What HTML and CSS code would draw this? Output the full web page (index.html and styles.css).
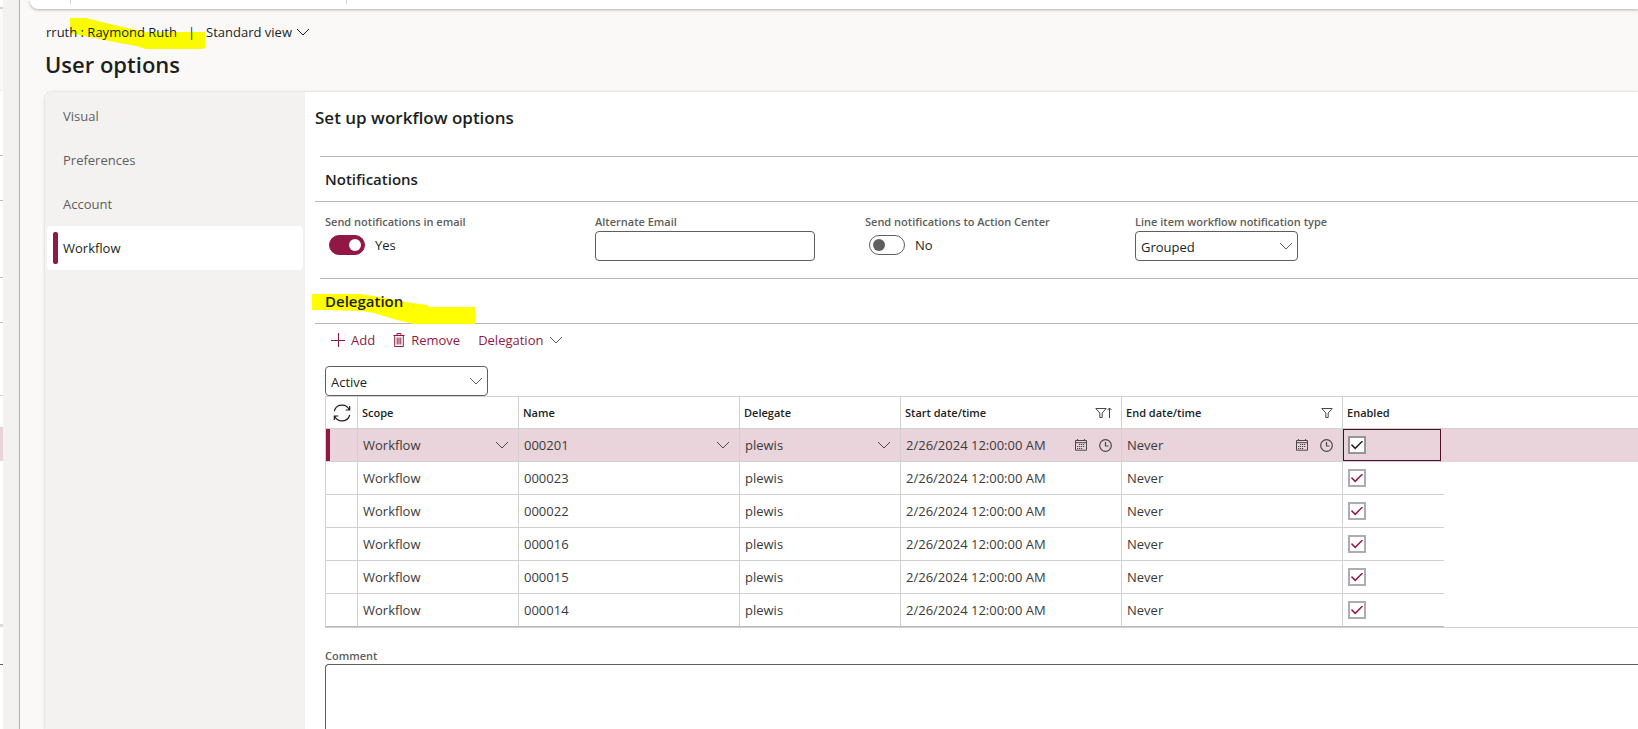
FILE: index.html
```html
<!DOCTYPE html>
<html lang="en">
<head>
<meta charset="utf-8">
<title>User options</title>
<link rel="stylesheet" href="styles.css">
</head>
<body>
<svg class="sprite" aria-hidden="true">
  <symbol id="chevron" viewBox="0 0 14 14"><path d="M1 4l6 6 6-6" fill="none" stroke="currentColor"/></symbol>
  <symbol id="plus" viewBox="0 0 14 14"><path d="M7.500 0v14M0 7.500h14" fill="none" stroke="currentColor"/></symbol>
  <symbol id="trash" viewBox="0 0 12 14"><path d="M.5 2.500h11M4 2.500V.6h4v1.900M1.700 2.500v11h8.600v-11M4.200 4.500v7M6 4.500v7M7.800 4.500v7" fill="none" stroke="currentColor"/></symbol>
  <symbol id="refresh" viewBox="0 0 18 18"><path d="M1.300 7A8 8 0 0 1 16.200 5.500M16.700 2v4h-4M16.700 11A8 8 0 0 1 1.800 12.500M1.300 16v-4h4" fill="none" stroke="currentColor" stroke-width="1.200"/></symbol>
  <symbol id="filter" viewBox="0 0 12 12"><path d="M.8 1.500h10.400L7.200 6v4.500H4.800V6z" fill="none" stroke="currentColor"/></symbol>
  <symbol id="arrow-up" viewBox="0 0 5 12"><path d="M2.500 11V1M.4 3.200L2.500 1l2.100 2.200" fill="none" stroke="currentColor"/></symbol>
  <symbol id="calendar" viewBox="0 0 12 12"><path d="M.5 1.500h11v9.700H.5zM.5 3.700h11M2.500 0v2M9.500 0v2" fill="none" stroke="currentColor"/><path d="M4 5.500h6M2 7.500h8M2 9.500h6" fill="none" stroke="currentColor" stroke-width="1.200" stroke-dasharray="1.200 .8"/></symbol>
  <symbol id="clock" viewBox="0 0 13 13"><circle cx="6.500" cy="6.500" r="5.800" fill="none" stroke="currentColor" stroke-width="1.200"/><path d="M6.500 3v4h3" fill="none" stroke="currentColor" stroke-width="1.200"/></symbol>
</svg>
<div class="app">
  <div class="backdrop" aria-hidden="true">
    <div class="sliver">
      <i class="s-bar"></i><i class="s-head"></i><i class="s-line h65"></i><i class="s-line h45"></i><i class="s-line h77"></i><i class="s-line h45"></i><i class="s-line h73"></i><i class="s-gap"></i><i class="s-row"></i><i class="s-space"></i><i class="s-dark"></i>
    </div>
  </div>
  <div class="page">
    <div class="action-bar"><i></i><i></i></div>
    <header class="page-head">
      <div class="crumbs">
        <svg class="marker marker-user" viewBox="0 0 135 31" aria-hidden="true"><path d="M0 0H16L40 6L75 14H135V30L132 31H76L66 28L50 25L14 18L0 15Z"/></svg>
        <span>rruth : Raymond Ruth</span><span class="bar">|</span>
        <button class="view" type="button">Standard view <svg class="ic14"><use href="#chevron"/></svg></button>
      </div>
      <h1>User options</h1>
    </header>
    <div class="panel">
      <nav class="tabs">
        <a href="#visual">Visual</a>
        <a href="#preferences">Preferences</a>
        <a href="#account">Account</a>
        <a href="#workflow" class="active" aria-current="page">Workflow</a>
      </nav>
      <main class="content">
        <h2>Set up workflow options</h2>
        <section>
          <h3>Notifications</h3>
          <div class="fields">
            <div class="field">
              <label for="email-on">Send notifications in email</label>
              <div class="switch"><input type="checkbox" id="email-on" checked><span>Yes</span></div>
            </div>
            <div class="field">
              <label for="alt">Alternate Email</label>
              <input class="text" type="text" id="alt">
            </div>
            <div class="field">
              <label for="center-on">Send notifications to Action Center</label>
              <div class="switch"><input type="checkbox" id="center-on"><span>No</span></div>
            </div>
            <div class="field">
              <label for="kind">Line item workflow notification type</label>
              <div class="combo"><select id="kind"><option>Grouped</option></select><svg class="ic14"><use href="#chevron"/></svg></div>
            </div>
          </div>
        </section>
        <section>
          <h3 class="marked"><svg class="marker marker-section" viewBox="0 0 163 30" aria-hidden="true"><path d="M0 0H48L68 3L93 8L115 11L117 13H163V30H102L85 26L62 19L50 17L14 16H0Z"/></svg><span>Delegation</span></h3>
          <div class="toolbar">
            <button type="button"><svg class="ic14"><use href="#plus"/></svg>Add</button>
            <button type="button"><svg class="ic-trash"><use href="#trash"/></svg>Remove</button>
            <button type="button" class="menu">Delegation<svg class="ic14 dim"><use href="#chevron"/></svg></button>
          </div>
          <div class="combo"><select aria-label="Status"><option>Active</option></select><svg class="ic14"><use href="#chevron"/></svg></div>
          <table class="grid">
            <colgroup><col class="c-mark"><col class="c-short"><col class="c-long"><col class="c-short"><col class="c-long"><col class="c-long"><col class="c-check"><col></colgroup>
            <thead>
              <tr>
                <th class="mark"><button type="button" aria-label="Refresh"><svg class="ic18"><use href="#refresh"/></svg></button></th>
                <th>Scope</th><th>Name</th><th>Delegate</th>
                <th><div class="split">Start date/time<span class="sort"><svg class="ic12"><use href="#filter"/></svg><svg class="ic-up"><use href="#arrow-up"/></svg></span></div></th>
                <th><div class="split">End date/time<svg class="ic12"><use href="#filter"/></svg></div></th>
                <th>Enabled</th><th class="rest"></th>
              </tr>
            </thead>
            <tbody>
              <tr class="current">
                <td></td>
                <td><div class="split">Workflow<button type="button" aria-label="Open scope"><svg class="ic14"><use href="#chevron"/></svg></button></div></td>
                <td><div class="split">000201<button type="button" aria-label="Open name"><svg class="ic14"><use href="#chevron"/></svg></button></div></td>
                <td><div class="split">plewis<button type="button" aria-label="Open delegate"><svg class="ic14"><use href="#chevron"/></svg></button></div></td>
                <td><div class="split">2/26/2024 12:00:00 AM<span class="pickers"><button type="button" aria-label="Pick start date"><svg class="ic12"><use href="#calendar"/></svg></button><button type="button" aria-label="Pick start time"><svg class="ic13"><use href="#clock"/></svg></button></span></div></td>
                <td><div class="split">Never<span class="pickers"><button type="button" aria-label="Pick end date"><svg class="ic12"><use href="#calendar"/></svg></button><button type="button" aria-label="Pick end time"><svg class="ic13"><use href="#clock"/></svg></button></span></div></td>
                <td class="check focus"><div><input type="checkbox" aria-label="Enabled 000201" checked></div></td><td class="rest"></td>
              </tr>
              <tr><td></td><td>Workflow</td><td>000023</td><td>plewis</td><td>2/26/2024 12:00:00 AM</td><td>Never</td><td class="check"><div><input type="checkbox" aria-label="Enabled 000023" checked></div></td><td class="rest"></td></tr>
              <tr><td></td><td>Workflow</td><td>000022</td><td>plewis</td><td>2/26/2024 12:00:00 AM</td><td>Never</td><td class="check"><div><input type="checkbox" aria-label="Enabled 000022" checked></div></td><td class="rest"></td></tr>
              <tr><td></td><td>Workflow</td><td>000016</td><td>plewis</td><td>2/26/2024 12:00:00 AM</td><td>Never</td><td class="check"><div><input type="checkbox" aria-label="Enabled 000016" checked></div></td><td class="rest"></td></tr>
              <tr><td></td><td>Workflow</td><td>000015</td><td>plewis</td><td>2/26/2024 12:00:00 AM</td><td>Never</td><td class="check"><div><input type="checkbox" aria-label="Enabled 000015" checked></div></td><td class="rest"></td></tr>
              <tr><td></td><td>Workflow</td><td>000014</td><td>plewis</td><td>2/26/2024 12:00:00 AM</td><td>Never</td><td class="check"><div><input type="checkbox" aria-label="Enabled 000014" checked></div></td><td class="rest"></td></tr>
            </tbody>
          </table>
          <div class="comment">
            <label for="comment">Comment</label>
            <textarea id="comment"></textarea>
          </div>
        </section>
      </main>
    </div>
  </div>
</div>
</body>
</html>
```
FILE: styles.css
```css
:root {
  --brand: #911844;
  --ink: #201f1e;
  --muted: #605e5c;
  --rule: #bab8b7;
  --cell: #d1d1d1;
  --canvas: #faf9f8;
  --shade: #f3f2f1;
}
* { box-sizing: border-box; }
body {
  margin: 0;
  height: 100vh;
  overflow: hidden;
  background: var(--canvas);
  color: var(--ink);
  font: 13px/20px "Open Sans", "Noto Sans", sans-serif;
}
h1, h2, h3 { margin: 0; font-weight: 600; }
button { display: inline-flex; align-items: center; padding: 0; border: 0; background: none; color: inherit; font: inherit; }
input, select, textarea { margin: 0; font: inherit; color: inherit; }
svg { display: block; flex: none; }
.sprite { position: absolute; width: 0; height: 0; }
.ic12 { width: 12px; height: 12px; }
.ic13 { width: 13px; height: 13px; }
.ic14 { width: 14px; height: 14px; }
.ic18 { width: 18px; height: 18px; }
.ic-up { width: 5px; height: 12px; }
.ic-trash { width: 12px; height: 14px; }

.app { display: flex; height: 100vh; }
.backdrop { flex: none; width: 20px; background: var(--shade); border-right: 1px solid #b3b0ad; }
.sliver { display: flex; flex-direction: column; width: 3px; height: 100vh; background: #fff; }
.s-bar { height: 9px; border-bottom: 2px solid #d5d4d3; }
.s-head { height: 82px; background: var(--canvas); border-bottom: 1px solid #eae9e8; }
.s-line { border-bottom: 1px solid var(--rule); }
.h65 { height: 65px; }
.h45 { height: 45px; }
.h77 { height: 77px; }
.h73 { height: 73px; border-color: var(--cell); }
.s-gap { height: 32px; border-bottom: 1px solid var(--cell); }
.s-row { height: 33px; background: #e9d4dc; }
.s-space { height: 166px; border-bottom: 3px solid #dcdbda; }
.s-dark { height: 38px; border-bottom: 1px solid var(--muted); }

.page { flex: 1; min-width: 0; display: flex; flex-direction: column; }
.action-bar { flex: none; display: flex; gap: 275px; height: 9px; margin-left: 10px; padding-left: 40px; background: #fff; border-bottom-left-radius: 8px; box-shadow: 0 1px 3px rgba(0, 0, 0, .3); }
.action-bar i { width: 1px; height: 4px; background: #d8d6d4; }
.page-head { padding: 13px 0 0 25px; }
.crumbs { position: relative; display: flex; align-items: center; height: 20px; padding-left: 1px; }
.crumbs .bar { margin: 0 11px; }
.crumbs > span, .view { position: relative; }
.view { gap: 4px; }
.marker { position: absolute; fill: #fbfb00; }
.marker-user { left: 25px; top: -4px; width: 135px; height: 31px; }
h1 { padding-top: 6px; font-size: 22px; line-height: 32px; }

.panel { flex: 1; min-height: 0; display: flex; margin: 12px 0 0 25px; background: #fff; border-top-left-radius: 8px; box-shadow: 0 0 3px rgba(0, 0, 0, .22); }
.tabs { flex: none; width: 260px; padding: 2px; background: var(--shade); border-top-left-radius: 8px; }
.tabs a { display: flex; align-items: center; height: 44px; padding-left: 16px; color: var(--muted); text-decoration: none; border-radius: 4px; }
.tabs .active { gap: 5px; padding-left: 6px; background: #fff; color: var(--ink); }
.tabs .active::before { content: ""; width: 5px; height: 32px; border-radius: 2px; background: var(--brand); }

.content { flex: 1; min-width: 0; display: flex; flex-direction: column; padding: 14px 0 0 10px; }
.content > section:last-child { flex: 1; min-height: 0; display: flex; flex-direction: column; }
h2 { padding-bottom: 26px; font-size: 17px; line-height: 24px; }
section { padding-left: 10px; }
h3 { flex: none; display: flex; align-items: center; height: 46px; margin-left: -10px; padding-left: 10px; font-size: 15px; background: linear-gradient(var(--rule), var(--rule)) 5px 0 / 100% 1px no-repeat; border-bottom: 1px solid var(--rule); }
.marked { position: relative; }
.marked span { position: relative; }
.marker-section { left: -3px; top: 16px; width: 163px; height: 30px; fill: #ff0; }
label { display: block; color: var(--muted); font-size: 11px; font-weight: 600; line-height: 16px; }
.fields { display: grid; grid-template-columns: repeat(4, 270px); height: 76px; padding-top: 12px; }
.field label { padding-bottom: 1px; }
.text { display: block; width: 220px; height: 30px; border: 1px solid var(--muted); border-radius: 4px; background: #fff; }
.switch { display: flex; align-items: center; gap: 10px; height: 28px; padding-left: 4px; }
.switch input { appearance: none; display: flex; align-items: center; width: 36px; height: 20px; padding: 0 3px; border: 1px solid var(--muted); border-radius: 10px; background: #fff; }
.switch input::before { content: ""; width: 12px; height: 12px; border-radius: 50%; background: var(--muted); }
.switch input:checked { justify-content: flex-end; border-color: var(--brand); background: var(--brand); }
.switch input:checked::before { background: #fff; }
.combo { display: grid; align-items: center; width: 163px; }
.combo > * { grid-area: 1 / 1; }
.combo select { appearance: none; width: 100%; height: 30px; padding: 1px 5px 0; border: 1px solid var(--muted); border-radius: 4px; background: #fff; }
.combo svg { justify-self: end; margin-right: 5px; pointer-events: none; color: var(--muted); }
.toolbar { display: flex; gap: 18px; height: 42px; padding: 6px 0 0 6px; color: var(--brand); }
.toolbar button { gap: 6px; height: 20px; }
.dim { color: var(--muted); }

.grid { width: 100%; table-layout: fixed; border-collapse: separate; border-spacing: 0; border-left: 1px solid var(--cell); border-bottom: 1px solid var(--cell); }
.c-mark { width: 32px; }
.c-short { width: 161px; }
.c-long { width: 221px; }
.c-check { width: 101px; }
.grid th, .grid td { height: 33px; padding: 0 9px 0 5px; text-align: left; border-right: 1px solid var(--cell); border-bottom: 1px solid var(--cell); white-space: nowrap; }
.grid th { padding-left: 4px; border-top: 1px solid var(--cell); font-size: 11px; font-weight: 600; }
.grid .mark { padding: 0 0 0 7px; }
.grid .mark button { display: flex; }
.grid tr > :nth-last-child(-n+2) { border-right: 0; }
.grid td { color: #3b3a39; }
.grid td.rest { border-bottom: 0; }
.grid tbody tr:last-child td { border-bottom-color: var(--rule); }
.grid tbody tr:last-child td.rest { border-bottom: 0; }
.split { display: flex; align-items: center; justify-content: space-between; }
.split svg { color: #4a4846; }
.sort { display: flex; }
.pickers { display: flex; gap: 12px; }
.current td { background: #e9d4dc; }
.current td:first-child { box-shadow: inset 4px 0 var(--brand); }
.grid .check { padding: 0 3px 0 0; }
.check div { display: flex; align-items: center; height: 32px; padding: 0 4px; border: 1px solid transparent; }
.check.focus div { border-color: #4c0c24; }
.check input { appearance: none; display: grid; place-items: center; width: 18px; height: 18px; border: 2px solid #adadad; background: #fff; }
.check input::before { content: ""; width: 12px; height: 9px; background: var(--brand); clip-path: polygon(0 52%, 8% 40%, 35% 76%, 92% 0, 100% 10%, 35% 100%); }
.check.focus input { border-color: #979593; }
.check.focus input::before { background: var(--ink); }
.comment { flex: 1; min-height: 0; display: flex; flex-direction: column; padding-top: 20px; }
.comment textarea { display: block; flex: 1; min-height: 0; width: 100%; border: 1px solid var(--muted); border-width: 1px 0 0 1px; border-top-left-radius: 4px; background: #fff; resize: none; }
```
